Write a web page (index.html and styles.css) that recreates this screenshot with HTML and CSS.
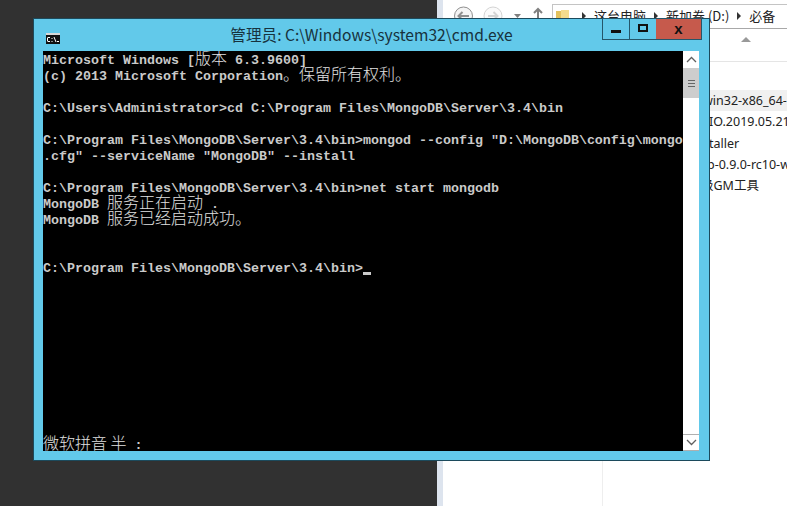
FILE: index.html
```html
<!DOCTYPE html>
<html lang="zh-CN">
<head>
<meta charset="utf-8">
<title>cmd.exe</title>
<link rel="stylesheet" href="styles.css">
</head>
<body>
<div class="desktop">
  <section class="explorer">
    <div class="toolbar">
      <svg class="nav" width="109" height="29" viewBox="0 0 109 29">
        <circle cx="20.5" cy="16" r="9" fill="#f4f4f4" stroke="#8f8f8f"/>
        <path d="M26 16H16M19.5 12l-4 4 4 4" fill="none" stroke="#8f8f8f" stroke-width="2"/>
        <circle cx="50" cy="16" r="9" fill="#fafafa" stroke="#d4d4d4"/>
        <path d="M45 16h9M50.5 12l4 4-4 4" fill="none" stroke="#d4d4d4" stroke-width="2"/>
        <path d="M71 14l3.5 4 3.5-4z" fill="#808080"/>
        <path d="M95 19V9M91 13l4-4 4 4" fill="none" stroke="#808080" stroke-width="2"/>
      </svg>
      <div class="address">
        <svg class="folder" width="13" height="11" viewBox="0 0 13 11"><path d="M0 1h5v10H0z" fill="#e3c25e"/><path d="M5 0h8v11H5z" fill="#f3dc8e"/></svg>
        <span class="crumb-arrow"></span><span>这台电脑</span>
        <span class="crumb-arrow"></span><span>新加卷 (D:)</span>
        <span class="crumb-arrow"></span><span>必备</span>
      </div>
    </div>
    <div class="head-row"><span class="sort"></span></div>
    <ul class="files">
      <li class="selected row-win">win32-x86_64-</li>
      <li class="row-aio">AIO.2019.05.21</li>
      <li class="row-inst">installer</li>
      <li class="row-ver">p-0.9.0-rc10-w</li>
      <li class="row-gm">级GM工具</li>
    </ul>
    <div class="col-line"></div>
  </section>

  <section class="cmd">
    <header class="titlebar">
      <svg class="app-icon" width="14" height="11" viewBox="0 0 14 11"><rect width="14" height="11" fill="#111"/><rect width="14" height="2" fill="#d8d8d8"/><path d="M2 4.5h2M2 8.5h2M1.5 4.5v4M6 5v1M6 8v1M8 4l2 5M11 8.5h2" stroke="#fff" fill="none"/></svg>
      <h1 class="title">管理员: C:\Windows\system32\cmd.exe</h1>
    </header>
    <div class="controls">
      <span class="btn min"><i></i></span>
      <span class="btn max"><i></i></span>
      <span class="btn close">x</span>
    </div>
    <div class="client">
      <pre class="console">Microsoft Windows [<span class="cjk">版本</span> 6.3.9600]
(c) 2013 Microsoft Corporation<span class="cjk">。保留所有权利。</span>

C:\Users\Administrator&gt;cd C:\Program Files\MongoDB\Server\3.4\bin

C:\Program Files\MongoDB\Server\3.4\bin&gt;mongod --config "D:\MongoDB\config\mongo
.cfg" --serviceName "MongoDB" --install

C:\Program Files\MongoDB\Server\3.4\bin&gt;net start mongodb
MongoDB <span class="cjk">服务正在启动</span> .
MongoDB <span class="cjk">服务已经启动成功。</span>


C:\Program Files\MongoDB\Server\3.4\bin&gt;<span class="cursor"></span></pre>
      <div class="ime"><span class="cjk">微软拼音 半</span> :</div>
      <div class="scrollbar">
        <span class="arrow"><svg width="11" height="7" viewBox="0 0 11 7"><path d="M1 6l4.5-4.5L10 6" fill="none" stroke="#606060" stroke-width="1.3"/></svg></span>
        <span class="thumb"><i></i><i></i><i></i></span>
        <span class="track"></span>
        <span class="arrow down"><svg width="11" height="7" viewBox="0 0 11 7"><path d="M1 1l4.5 4.5L10 1" fill="none" stroke="#606060" stroke-width="1.3"/></svg></span>
      </div>
    </div>
  </section>
</div>
</body>
</html>
```
FILE: styles.css
```css
* { box-sizing: border-box; }
html, body { margin: 0; padding: 0; }
.desktop {
  position: relative;
  width: 787px;
  height: 506px;
  overflow: hidden;
  background: #313131;
}
.explorer {
  position: absolute;
  left: 437px;
  top: 0;
  width: 350px;
  height: 506px;
  background: #fff;
  border-left: 6px solid #dde4ee;
  font-family: "Noto Sans CJK SC", "Liberation Sans", sans-serif;
  font-size: 13px;
  color: #222;
  overflow: hidden;
}
.toolbar { display: flex; height: 29px; align-items: flex-start; }
.nav { flex: none; width: 109px; }
.address {
  flex: 1;
  height: 25px;
  margin-top: 4px;
  border: 1px solid #c4c4c4;
  border-right: 0;
  border-bottom-color: #a8a8a8;
  display: flex;
  align-items: center;
  gap: 8px;
  padding: 0 0 2px 3px;
  white-space: nowrap;
}
.folder { flex: none; margin-right: 5px; }
.crumb-arrow {
  flex: none;
  width: 0; height: 0;
  border-left: 4px solid #333;
  border-top: 4px solid transparent;
  border-bottom: 4px solid transparent;
}
.head-row { height: 33px; border-bottom: 1px solid #e5e5e5; position: relative; }
.sort {
  position: absolute;
  left: 298px; top: 8px;
  border-left: 5px solid transparent;
  border-right: 5px solid transparent;
  border-bottom: 5px solid #999;
}
.files {
  list-style: none;
  margin: 28px 0 0;
  padding: 0;
  font-family: "Noto Sans", "Noto Sans CJK SC", sans-serif;
  font-size: 12.5px;
  white-space: nowrap;
}
.files li { height: 21.3px; line-height: 21px; }
.selected { background: #f0f0f0; }
.row-win { padding-left: 260px; }
.row-aio { padding-left: 258px; }
.row-inst { padding-left: 249px; }
.row-ver { padding-left: 264px; }
.row-gm { padding-left: 258px; }
.col-line {
  position: absolute;
  left: 159px; top: 460px; bottom: 0;
  width: 1px;
  background: #eee;
}
.cmd {
  position: absolute;
  left: 33px;
  top: 18px;
  width: 677px;
  height: 443px;
  background: #62c9ea;
  border: 1px solid #1c4a5c;
}
.titlebar {
  height: 32px;
  display: flex;
  align-items: center;
  position: relative;
  padding-left: 12px;
}
.app-icon { flex: none; margin-top: 7px; }
.title {
  position: absolute;
  left: 0; right: 0; top: 4px;
  margin: 0;
  text-align: center;
  font-family: "Noto Sans CJK SC", sans-serif;
  font-size: 15.6px;
  font-weight: 400;
  line-height: 22px;
  color: #17323d;
}
.controls {
  position: absolute;
  right: 7px; top: -1px;
  display: flex;
  height: 22px;
  border: 1px solid #24566a;
}
.btn { display: flex; align-items: center; justify-content: center; height: 20px; }
.min { width: 27px; border-right: 1px solid #24566a; }
.min i { width: 10px; height: 3px; background: #111; margin-top: 4px; }
.max { width: 26px; }
.max i { width: 10px; height: 8px; border: 2px solid #111; margin-top: -2px; }
.close {
  width: 45px;
  background: #c65a4c;
  font: bold 15px/18px "Liberation Sans", sans-serif;
  color: #111;
}
.client {
  position: relative;
  margin-left: 9px;
  width: 656px;
  height: 400px;
  background: #000;
  overflow: hidden;
}
.console, .ime {
  margin: 0;
  font-family: "Liberation Mono", monospace;
  font-weight: 700;
  font-size: 13.33px;
  line-height: 16px;
  color: #cacaca;
  white-space: pre;
}
.console { width: 640px; padding-top: 2px; overflow: hidden; }
.cjk {
  font-family: "Noto Sans CJK SC", sans-serif;
  font-weight: 300;
  font-size: 16px;
  line-height: 0;
  color: #e0e0e0;
}
.cursor {
  display: inline-block;
  width: 8px;
  height: 3px;
  background: #cacaca;
  vertical-align: -3px;
}
.ime {
  position: absolute;
  left: 0; bottom: -3px;
}
.scrollbar {
  position: absolute;
  right: 0; top: 0; bottom: 0;
  width: 16px;
  background: #fff;
  display: flex;
  flex-direction: column;
}
.arrow { height: 17px; display: flex; align-items: center; justify-content: center; flex: none; }
.arrow.down { border-top: 1px solid #b0b0b0; border-bottom: 1px solid #b0b0b0; }
.thumb {
  height: 30px;
  background: #cdcdcd;
  display: flex;
  flex-direction: column;
  align-items: center;
  justify-content: center;
  gap: 2px;
  flex: none;
}
.thumb i { width: 7px; height: 1px; background: #666; }
.track { flex: 1; }
```
